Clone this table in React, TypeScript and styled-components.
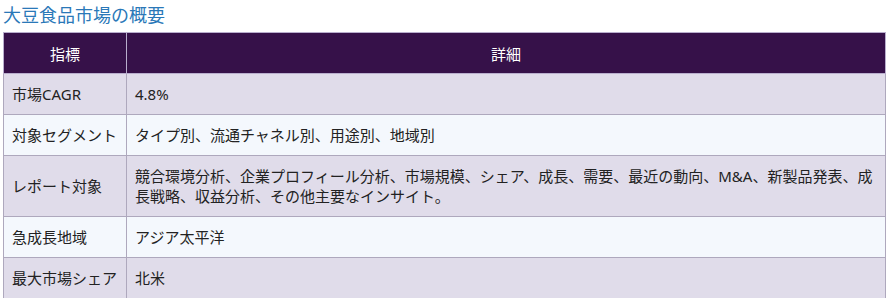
import React from "react";
import styled, { createGlobalStyle } from "styled-components";

const GlobalStyle = createGlobalStyle`
  body {
    margin: 0;
    background: #ffffff;
    font-family: "Noto Sans", "Noto Sans CJK JP", sans-serif;
  }
`;

const Page = styled.div`
  padding: 2px 2px 0 3px;
`;

const Heading = styled.h2`
  margin: 0 0 6px;
  font-size: 18px;
  font-weight: 400;
  line-height: 24px;
  color: #2a78b8;
  font-family: "Noto Sans CJK JP", sans-serif;
`;

const Table = styled.table`
  width: 883px;
  border-collapse: collapse;
  font-size: 15px;
  color: #222222;
  font-family: "Noto Sans", "Noto Sans CJK JP", sans-serif;
`;

const HeadCell = styled.th<{ $label?: boolean }>`
  background: #361149;
  color: #ffffff;
  font-weight: 400;
  text-align: center;
  height: 40px;
  padding: 0 8px;
  border: 1px solid #b9aecd;
  width: ${(p) => (p.$label ? "105px" : "auto")};
`;

const Row = styled.tr<{ $alt: boolean }>`
  background: ${(p) => (p.$alt ? "#f4f8fd" : "#e0dcea")};
`;

const Cell = styled.td<{ $label?: boolean }>`
  border: 1px solid #aea8bd;
  padding: 10px 9px 10px 8px;
  line-height: 20px;
  vertical-align: middle;
  white-space: ${(p) => (p.$label ? "nowrap" : "normal")};
`;

const rows = [
  ["市場CAGR", "4.8%"],
  ["対象セグメント", "タイプ別、流通チャネル別、用途別、地域別"],
  [
    "レポート対象",
    "競合環境分析、企業プロフィール分析、市場規模、シェア、成長、需要、最近の動向、M&A、新製品発表、成長戦略、収益分析、その他主要なインサイト。",
  ],
  ["急成長地域", "アジア太平洋"],
  ["最大市場シェア", "北米"],
];

const App: React.FC = () => {
  return (
    <Page>
      <GlobalStyle />
      <Heading>大豆食品市場の概要</Heading>
      <Table>
        <thead>
          <tr>
            <HeadCell $label>指標</HeadCell>
            <HeadCell>詳細</HeadCell>
          </tr>
        </thead>
        <tbody>
          {rows.map(([label, value], i) => (
            <Row key={label} $alt={i % 2 === 1}>
              <Cell $label>{label}</Cell>
              <Cell>{value}</Cell>
            </Row>
          ))}
        </tbody>
      </Table>
    </Page>
  );
};

export default App;
